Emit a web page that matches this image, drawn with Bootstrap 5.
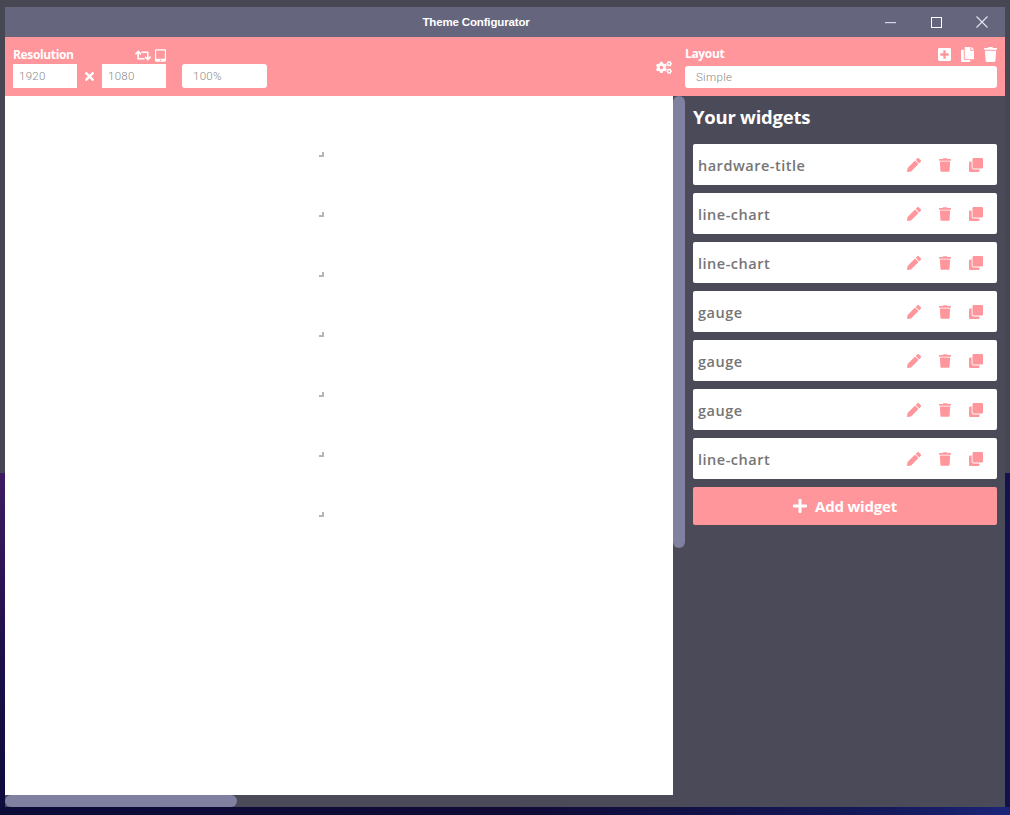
<!DOCTYPE html>
<html lang="en">
<head>
<meta charset="utf-8">
<title>Theme Configurator</title>
<link href="https://cdn.jsdelivr.net/npm/bootstrap@5.3.0/dist/css/bootstrap.min.css" rel="stylesheet">
<style>
html,body{height:815px;overflow:hidden}
body{font-family:"Open Sans","Noto Sans",sans-serif;padding:7px 5px 8px;
 background-color:#0c0c3a;
 background-image:linear-gradient(#474753,#474753),linear-gradient(#3e1b63,#1c0f48 55%,#0c0c3a),linear-gradient(to right,#0c0c3a,#100a35 50%,#141a5c 88%,#1c2478),linear-gradient(#15154f,#12124a);
 background-size:100% 473px,5px 342px,100% 8px,100% 100%;
 background-position:0 0,0 473px,0 807px,0 0;
 background-repeat:no-repeat}
.app-win{width:1000px;height:800px}
.title-strip{height:30px;background:#65657d;color:#fff}
.title-text{padding-left:79px;font:700 11.5px "Liberation Sans",sans-serif;letter-spacing:-.15px}
.win-btn{width:46px;height:30px;color:#e6e6f0}
.win-btn.first-btn{width:45px}
.tool-strip{height:59px;background:#ff969c;color:#fff}
.res-group{padding:8px 0 0 8px;width:161px}
.res-head{height:19px;padding-top:1px}
.tool-label{font-size:12px;font-weight:700;line-height:16px;letter-spacing:-.35px}
.tool-input.form-control{height:24px;min-height:0;width:64px;padding:0 6px;border:0;border-radius:0;font:300 11.5px "Roboto",sans-serif;letter-spacing:.3px;color:#8a8a8a;background:#fff;box-shadow:none}
.zoom-slot{padding-top:27px;margin-left:16px}
.zoom-input.form-control{width:85px;padding-left:11px;border-radius:3px}
.layout-input.form-control{width:312px;height:22px;padding-left:11px;border-radius:3px}
.times-wrap{width:25px}
.cogs-wrap{width:16px;margin-right:13px;padding-top:24px}
.layout-group{padding-top:9px;width:312px}
.layout-head{height:20px;padding-bottom:4px}
.layout-ico{gap:10px}
.main-area{height:711px}
.canvas-col{width:680px;background:#4b4a58}
.canvas-row{height:699px}
.canvas-page{width:668px;background:#fff;padding-top:1px}
.handle-slot{width:319px;height:60px}
.grip{width:5px;height:5px;border-right:2px solid #b5b5b5;border-bottom:2px solid #b5b5b5}
.v-track{width:12px}
.v-thumb{height:452px;background:#8080a0;border-radius:6px}
.h-track{height:12px}
.h-thumb{width:232px;height:12px;background:#8080a0;border-radius:6px}
.side-col{width:320px;background:#4b4a58;padding:8px}
.side-head{font-size:18.5px;font-weight:700;line-height:26px;color:#fff;margin:0 0 14px;letter-spacing:-.25px}
.widget-row.list-group-item{height:41px;padding:1px 14px 0 5px;margin-bottom:8px;border:0;border-radius:2px;background:#fff;color:#757575;font-size:14.5px;font-weight:600;letter-spacing:.5px}
.widget-name{padding-top:2px}
.pink-ico{color:#ff969c;gap:18px}
.add-btn.btn{height:38px;background:#ff969c;border:0;border-radius:2px;color:#fff;font-size:15px;font-weight:700;letter-spacing:-.2px}
svg{display:block;fill:currentColor}
</style>
</head>
<body>
<svg width="0" height="0" class="position-absolute">
<symbol id="i-pen" viewBox="0 0 512 512"><path d="M497.9 142.1l-46.1 46.1c-4.7 4.7-12.3 4.7-17 0l-111-111c-4.7-4.7-4.7-12.3 0-17l46.1-46.1c18.7-18.7 49.1-18.7 67.9 0l60.1 60.1c18.8 18.7 18.8 49.1 0 67.9zM284.2 99.8L21.6 362.4.4 483.9c-2.9 16.4 11.4 30.6 27.8 27.8l121.5-21.3 262.6-262.6c4.7-4.7 4.7-12.3 0-17l-111-111c-4.8-4.7-12.4-4.7-17.1 0z"/></symbol>
<symbol id="i-trash" viewBox="0 0 448 512"><path d="M432 32H312l-9.4-18.7A24 24 0 0 0 281.1 0H166.8a23.72 23.72 0 0 0-21.4 13.3L136 32H16A16 16 0 0 0 0 48v32a16 16 0 0 0 16 16h416a16 16 0 0 0 16-16V48a16 16 0 0 0-16-16zM53.2 467a48 48 0 0 0 47.9 45h245.8a48 48 0 0 0 47.9-45L416 128H32z"/></symbol>
<symbol id="i-clone" viewBox="0 0 512 512"><path d="M464 0c26.51 0 48 21.49 48 48v288c0 26.51-21.49 48-48 48H176c-26.51 0-48-21.49-48-48V48c0-26.51 21.49-48 48-48h288M176 416c-44.112 0-80-35.888-80-80V128H48c-26.51 0-48 21.49-48 48v288c0 26.51 21.49 48 48 48h288c26.51 0 48-21.49 48-48v-48H176z"/></symbol>
<symbol id="i-plus" viewBox="0 0 448 512"><path d="M416 208H272V64c0-17.67-14.33-32-32-32h-32c-17.67 0-32 14.33-32 32v144H32c-17.67 0-32 14.33-32 32v32c0 17.67 14.33 32 32 32h144v144c0 17.67 14.33 32 32 32h32c17.67 0 32-14.33 32-32V304h144c17.67 0 32-14.33 32-32v-32c0-17.67-14.33-32-32-32z"/></symbol>
<symbol id="i-plus-sq" viewBox="0 0 448 512"><path d="M400 32H48C21.5 32 0 53.5 0 80v352c0 26.5 21.5 48 48 48h352c26.5 0 48-21.5 48-48V80c0-26.5-21.5-48-48-48zm-32 252c0 6.6-5.4 12-12 12h-92v92c0 6.6-5.4 12-12 12h-56c-6.6 0-12-5.4-12-12v-92H92c-6.6 0-12-5.4-12-12v-56c0-6.6 5.4-12 12-12h92v-92c0-6.6 5.4-12 12-12h56c6.6 0 12 5.4 12 12v92h92c6.6 0 12 5.4 12 12v56z"/></symbol>
<symbol id="i-copy" viewBox="0 0 448 512"><path d="M320 448v40c0 13.255-10.745 24-24 24H24c-13.255 0-24-10.745-24-24V120c0-13.255 10.745-24 24-24h72v296c0 30.879 25.121 56 56 56h168zm0-344V0H152c-13.255 0-24 10.745-24 24v368c0 13.255 10.745 24 24 24h272c13.255 0 24-10.745 24-24V128H344c-13.2 0-24-10.8-24-24zm120.971-31.029L375.029 7.029A24 24 0 0 0 358.059 0H352v96h96v-6.059a24 24 0 0 0-7.029-16.97z"/></symbol>
<symbol id="i-times" viewBox="0 0 352 512"><path d="M242.72 256l100.07-100.07c12.28-12.28 12.28-32.19 0-44.48l-22.24-22.24c-12.28-12.28-32.19-12.28-44.48 0L176 189.28 75.93 89.21c-12.28-12.28-32.19-12.28-44.48 0L9.21 111.45c-12.28 12.28-12.28 32.19 0 44.48L109.28 256 9.21 356.07c-12.28 12.28-12.28 32.19 0 44.48l22.24 22.24c12.28 12.28 32.2 12.28 44.48 0L176 322.72l100.07 100.07c12.28 12.28 32.2 12.28 44.48 0l22.24-22.24c12.28-12.28 12.28-32.19 0-44.48L242.72 256z"/></symbol>
<symbol id="i-tablet" viewBox="0 0 448 512"><path d="M400 0H48C21.5 0 0 21.5 0 48v416c0 26.5 21.5 48 48 48h352c26.5 0 48-21.5 48-48V48c0-26.5-21.5-48-48-48zM224 480c-17.7 0-32-14.3-32-32s14.3-32 32-32 32 14.3 32 32-14.3 32-32 32zm176-108c0 6.6-5.4 12-12 12H60c-6.6 0-12-5.4-12-12V60c0-6.6 5.4-12 12-12h328c6.6 0 12 5.4 12 12v312z"/></symbol>
<symbol id="i-retweet" viewBox="0 0 640 512"><path d="M629.657 343.598L528.971 444.284c-9.373 9.372-24.568 9.372-33.941 0L394.343 343.598c-9.373-9.373-9.373-24.569 0-33.941l10.823-10.823c9.562-9.562 25.133-9.34 34.419.492L480 342.118V160H292.451a24.005 24.005 0 0 1-16.971-7.029l-16-16C244.361 121.851 255.069 96 276.451 96H520c13.255 0 24 10.745 24 24v222.118l40.416-43.792c9.285-9.831 24.856-10.054 34.419-.492l10.823 10.823c9.372 9.372 9.372 24.569-.001 33.941zm-265.138 15.431A23.999 23.999 0 0 0 347.548 352H160V169.881l40.416 43.792c9.286 9.831 24.856 10.054 34.419.491l10.822-10.822c9.373-9.373 9.373-24.569 0-33.941L144.971 67.716c-9.373-9.373-24.569-9.373-33.941 0L10.343 168.402c-9.373 9.373-9.373 24.569 0 33.941l10.822 10.822c9.562 9.563 25.133 9.34 34.419-.491L96 169.881V392c0 13.255 10.745 24 24 24h243.549c21.382 0 32.09-25.851 16.971-40.971l-16.001-16z"/></symbol>
<symbol id="i-cogs" viewBox="0 0 640 512"><path d="M512.1 191l-8.2 14.3c-3 5.3-9.4 7.5-15.1 5.4-11.8-4.4-22.6-10.7-32.1-18.6-4.6-3.8-5.8-10.5-2.8-15.7l8.2-14.3c-6.9-8-12.3-17.3-15.9-27.4h-16.5c-6 0-11.2-4.3-12.2-10.3-2-12-2.1-24.6 0-37.1 1-6 6.2-10.4 12.2-10.4h16.5c3.6-10.1 9-19.4 15.9-27.4l-8.2-14.3c-3-5.2-1.9-11.9 2.8-15.7 9.5-7.9 20.4-14.2 32.1-18.6 5.7-2.1 12.1.1 15.1 5.4l8.2 14.3c10.5-1.9 21.2-1.9 31.7 0L552 6.3c3-5.3 9.4-7.5 15.1-5.4 11.8 4.4 22.6 10.7 32.1 18.6 4.6 3.8 5.8 10.5 2.8 15.7l-8.2 14.3c6.9 8 12.3 17.3 15.9 27.4h16.5c6 0 11.2 4.3 12.2 10.3 2 12 2.1 24.6 0 37.1-1 6-6.2 10.4-12.2 10.4h-16.5c-3.6 10.1-9 19.4-15.9 27.4l8.2 14.3c3 5.2 1.9 11.9-2.8 15.7-9.5 7.9-20.4 14.2-32.1 18.6-5.7 2.1-12.1-.1-15.1-5.4l-8.2-14.3c-10.4 1.9-21.2 1.9-31.7 0zm-10.5-58.8c38.5 29.6 82.4-14.3 52.8-52.8-38.5-29.7-82.4 14.3-52.8 52.8zM386.3 286.1l33.7 16.8c10.1 5.8 14.5 18.1 10.5 29.1-8.9 24.2-26.4 46.4-42.6 65.8-7.4 8.9-20.2 11.1-30.3 5.3l-29.1-16.8c-16 13.7-34.6 24.6-54.9 31.7v33.6c0 11.6-8.3 21.6-19.7 23.6-24.6 4.2-50.4 4.4-75.9 0-11.5-2-20-11.9-20-23.6V418c-20.3-7.2-38.9-18-54.9-31.7L74 403c-10 5.8-22.9 3.6-30.3-5.3-16.2-19.4-33.3-41.6-42.2-65.7-4-10.9.4-23.2 10.5-29.1l33.3-16.8c-3.9-20.9-3.9-42.4 0-63.4L12 205.8c-10.1-5.8-14.6-18.1-10.5-29 8.9-24.2 26-46.4 42.2-65.8 7.4-8.9 20.2-11.1 30.3-5.3l29.1 16.8c16-13.7 34.6-24.6 54.9-31.7V57.1c0-11.5 8.2-21.5 19.6-23.5 24.6-4.2 50.5-4.4 76-.1 11.5 2 20 11.9 20 23.6v33.6c20.3 7.2 38.9 18 54.9 31.7l29.1-16.8c10-5.8 22.9-3.6 30.3 5.3 16.2 19.4 33.2 41.6 42.1 65.8 4 10.9.1 23.2-10 29.1l-33.7 16.8c3.9 21 3.9 42.5 0 63.5zm-117.6 21.1c59.2-77-28.7-164.9-105.7-105.7-59.2 77 28.7 164.9 105.7 105.7zm243.4 182.7l-8.2 14.3c-3 5.3-9.4 7.5-15.1 5.4-11.8-4.4-22.6-10.7-32.1-18.6-4.6-3.8-5.8-10.5-2.8-15.7l8.2-14.3c-6.9-8-12.3-17.3-15.9-27.4h-16.5c-6 0-11.2-4.3-12.2-10.3-2-12-2.1-24.6 0-37.1 1-6 6.2-10.4 12.2-10.4h16.5c3.6-10.1 9-19.4 15.9-27.4l-8.2-14.3c-3-5.2-1.9-11.9 2.8-15.7 9.5-7.9 20.4-14.2 32.1-18.6 5.7-2.1 12.1.1 15.1 5.4l8.2 14.3c10.5-1.9 21.2-1.9 31.7 0l8.2-14.3c3-5.3 9.4-7.5 15.1-5.4 11.8 4.4 22.6 10.7 32.1 18.6 4.6 3.8 5.8 10.5 2.8 15.7l-8.2 14.3c6.9 8 12.3 17.3 15.9 27.4h16.5c6 0 11.2 4.3 12.2 10.3 2 12 2.1 24.6 0 37.1-1 6-6.2 10.4-12.2 10.4h-16.5c-3.6 10.1-9 19.4-15.9 27.4l8.2 14.3c3 5.2 1.9 11.9-2.8 15.7-9.5 7.9-20.4 14.2-32.1 18.6-5.7 2.1-12.1-.1-15.1-5.4l-8.2-14.3c-10.4 1.9-21.2 1.9-31.7 0zM501.6 431c38.5 29.6 82.4-14.3 52.8-52.8-38.5-29.6-82.4 14.3-52.8 52.8z"/></symbol>
</svg>

<div class="app-win d-flex flex-column">
  <div class="title-strip d-flex align-items-center">
    <div class="title-text flex-grow-1 text-center">Theme Configurator</div>
    <div class="win-btn first-btn d-flex align-items-center justify-content-center"><svg width="11" height="11" viewBox="0 0 11 11"><rect y="5" width="11" height="1.2" fill="#d6d6e6"/></svg></div>
    <div class="win-btn d-flex align-items-center justify-content-center"><svg width="11" height="11" viewBox="0 0 11 11"><rect x=".5" y=".5" width="10" height="10" fill="none" stroke="#fff"/></svg></div>
    <div class="win-btn d-flex align-items-center justify-content-center"><svg width="12" height="12" viewBox="0 0 12 12"><path d="M.5.5l11 11M11.5.5l-11 11" fill="none" stroke="#e6e6f0" stroke-width="1.1"/></svg></div>
  </div>

  <div class="tool-strip d-flex">
    <div class="res-group flex-shrink-0">
      <div class="res-head d-flex align-items-center justify-content-between">
        <span class="tool-label">Resolution</span>
        <span class="d-flex align-items-center gap-1">
          <svg width="16" height="13"><use href="#i-retweet"/></svg>
          <svg width="11" height="13"><use href="#i-tablet"/></svg>
        </span>
      </div>
      <div class="d-flex align-items-center">
        <input class="form-control tool-input" value="1920" aria-label="Width">
        <span class="times-wrap d-flex justify-content-center"><svg width="9" height="13"><use href="#i-times"/></svg></span>
        <input class="form-control tool-input" value="1080" aria-label="Height">
      </div>
    </div>
    <div class="zoom-slot flex-grow-1"><input class="form-control tool-input zoom-input" value="100%" aria-label="Zoom"></div>
    <div class="cogs-wrap"><svg width="16" height="13"><use href="#i-cogs"/></svg></div>
    <div class="layout-group flex-shrink-0 me-2">
      <div class="layout-head d-flex align-items-center justify-content-between">
        <span class="tool-label">Layout</span>
        <span class="layout-ico d-flex align-items-center">
          <svg width="13" height="15"><use href="#i-plus-sq"/></svg>
          <svg width="13" height="15"><use href="#i-copy"/></svg>
          <svg width="13" height="15"><use href="#i-trash"/></svg>
        </span>
      </div>
      <input class="form-control tool-input layout-input" value="Simple" aria-label="Layout">
    </div>
  </div>

  <div class="main-area d-flex">
    <div class="canvas-col d-flex flex-column">
      <div class="canvas-row d-flex">
        <div class="canvas-page">
          <div class="handle-slot d-flex justify-content-end align-items-end"><div class="grip"></div></div>
          <div class="handle-slot d-flex justify-content-end align-items-end"><div class="grip"></div></div>
          <div class="handle-slot d-flex justify-content-end align-items-end"><div class="grip"></div></div>
          <div class="handle-slot d-flex justify-content-end align-items-end"><div class="grip"></div></div>
          <div class="handle-slot d-flex justify-content-end align-items-end"><div class="grip"></div></div>
          <div class="handle-slot d-flex justify-content-end align-items-end"><div class="grip"></div></div>
          <div class="handle-slot d-flex justify-content-end align-items-end"><div class="grip"></div></div>
        </div>
        <div class="v-track"><div class="v-thumb"></div></div>
      </div>
      <div class="h-track"><div class="h-thumb"></div></div>
    </div>

    <div class="side-col">
      <h2 class="side-head">Your widgets</h2>
      <ul class="list-group mb-0">
        <li class="list-group-item widget-row d-flex align-items-center"><span class="widget-name flex-grow-1">hardware-title</span><span class="pink-ico d-flex align-items-center"><svg width="14" height="14"><use href="#i-pen"/></svg><svg width="12" height="14"><use href="#i-trash"/></svg><svg width="14" height="14"><use href="#i-clone"/></svg></span></li>
        <li class="list-group-item widget-row d-flex align-items-center"><span class="widget-name flex-grow-1">line-chart</span><span class="pink-ico d-flex align-items-center"><svg width="14" height="14"><use href="#i-pen"/></svg><svg width="12" height="14"><use href="#i-trash"/></svg><svg width="14" height="14"><use href="#i-clone"/></svg></span></li>
        <li class="list-group-item widget-row d-flex align-items-center"><span class="widget-name flex-grow-1">line-chart</span><span class="pink-ico d-flex align-items-center"><svg width="14" height="14"><use href="#i-pen"/></svg><svg width="12" height="14"><use href="#i-trash"/></svg><svg width="14" height="14"><use href="#i-clone"/></svg></span></li>
        <li class="list-group-item widget-row d-flex align-items-center"><span class="widget-name flex-grow-1">gauge</span><span class="pink-ico d-flex align-items-center"><svg width="14" height="14"><use href="#i-pen"/></svg><svg width="12" height="14"><use href="#i-trash"/></svg><svg width="14" height="14"><use href="#i-clone"/></svg></span></li>
        <li class="list-group-item widget-row d-flex align-items-center"><span class="widget-name flex-grow-1">gauge</span><span class="pink-ico d-flex align-items-center"><svg width="14" height="14"><use href="#i-pen"/></svg><svg width="12" height="14"><use href="#i-trash"/></svg><svg width="14" height="14"><use href="#i-clone"/></svg></span></li>
        <li class="list-group-item widget-row d-flex align-items-center"><span class="widget-name flex-grow-1">gauge</span><span class="pink-ico d-flex align-items-center"><svg width="14" height="14"><use href="#i-pen"/></svg><svg width="12" height="14"><use href="#i-trash"/></svg><svg width="14" height="14"><use href="#i-clone"/></svg></span></li>
        <li class="list-group-item widget-row d-flex align-items-center"><span class="widget-name flex-grow-1">line-chart</span><span class="pink-ico d-flex align-items-center"><svg width="14" height="14"><use href="#i-pen"/></svg><svg width="12" height="14"><use href="#i-trash"/></svg><svg width="14" height="14"><use href="#i-clone"/></svg></span></li>
      </ul>
      <button type="button" class="btn add-btn w-100 d-flex align-items-center justify-content-center gap-2"><svg width="14" height="16"><use href="#i-plus"/></svg>Add widget</button>
    </div>
  </div>
</div>
<script src="https://cdn.jsdelivr.net/npm/bootstrap@5.3.0/dist/js/bootstrap.bundle.min.js"></script>
</body>
</html>
